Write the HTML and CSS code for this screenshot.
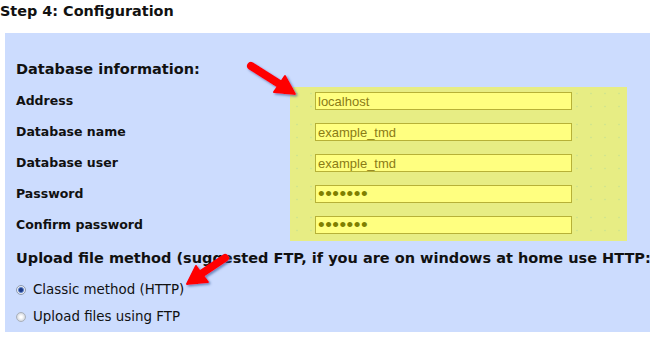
FILE: index.html
```html
<!DOCTYPE html>
<html lang="en">
<head>
<meta charset="UTF-8">
<title>Step 4: Configuration</title>
<link rel="stylesheet" href="styles.css">
</head>
<body>

<h1 class="step-title">Step 4: Configuration</h1>

<div class="panel">
  <h2 class="section-title">Database information:</h2>

  <div class="db-grid">
    <label class="field-label" for="db-host">Address</label>
    <div class="field-cell"><input class="field-input" id="db-host" type="text" value="localhost"></div>

    <label class="field-label" for="db-name">Database name</label>
    <div class="field-cell"><input class="field-input" id="db-name" type="text" value="example_tmd"></div>

    <label class="field-label" for="db-user">Database user</label>
    <div class="field-cell"><input class="field-input" id="db-user" type="text" value="example_tmd"></div>

    <label class="field-label" for="db-pass">Password</label>
    <div class="field-cell"><input class="field-input pass" id="db-pass" type="password" value="1234567"></div>

    <label class="field-label" for="db-pass2">Confirm password</label>
    <div class="field-cell field-cell-last"><input class="field-input pass" id="db-pass2" type="password" value="1234567"></div>
  </div>

  <h2 class="section-title upload-title">Upload file method (suggested FTP, if you are on windows at home use HTTP:</h2>

  <label class="radio-row"><input type="radio" name="method" checked>Classic method (HTTP)</label>
  <label class="radio-row"><input type="radio" name="method">Upload files using FTP</label>

  <!-- annotation arrows, drawn over the form -->
  <svg class="arrow arrow-db" width="65" height="47" viewBox="240 55 65 47">
    <g filter="url(#glow)">
      <line x1="251" y1="66" x2="281" y2="85" stroke="#f00" stroke-width="8" stroke-linecap="round"/>
      <polygon points="295,94 274,92 285,76" fill="#f00" stroke="#f00" stroke-width="2" stroke-linejoin="round"/>
    </g>
  </svg>

  <svg class="arrow arrow-upload" width="57" height="46" viewBox="178 248 57 46">
    <g filter="url(#glow)">
      <line x1="225" y1="258" x2="201" y2="274" stroke="#f00" stroke-width="8" stroke-linecap="round"/>
      <polygon points="187,284 196,266 208,282" fill="#f00" stroke="#f00" stroke-width="2" stroke-linejoin="round"/>
    </g>
  </svg>

  <svg class="defs" width="0" height="0">
    <filter id="glow" x="-30%" y="-30%" width="160%" height="160%">
      <feDropShadow dx="1.5" dy="1.5" stdDeviation="1.2" flood-color="#3b5e9c" flood-opacity="0.7"/>
    </filter>
  </svg>
</div>

</body>
</html>
```

FILE: styles.css
```css
body {
  margin: 0;
  background: #fff;
  color: #111;
  font-family: "DejaVu Sans", Verdana, sans-serif;
}

.step-title {
  margin: 3px 0 0;
  font-size: 14.4px;
  line-height: 16px;
  font-weight: bold;
}

.panel {
  position: relative;
  margin: 14px 0 0 5px;
  padding: 27px 0 6px 11px;
  background: #ccdcfe;
  overflow: hidden;
}

.section-title {
  margin: 0 0 9px;
  font-size: 14.5px;
  line-height: 18px;
  font-weight: bold;
}

.db-grid {
  display: grid;
  grid-template-columns: 274px 337px;
}

.field-label {
  padding-top: 5px;
  font-size: 12.5px;
  line-height: 18px;
  font-weight: bold;
}

.field-cell {
  padding: 5px 55px 8px 25px;
  background-color: #e7ed84;
  background-image: radial-gradient(circle, #d2e58c 0.8px, transparent 1.2px);
  background-size: 14px 13px;
}

.field-cell-last {
  padding-bottom: 7px;
}

.field-input {
  display: block;
  box-sizing: border-box;
  width: 257px;
  height: 18px;
  margin: 0;
  padding: 0 2px;
  border: 1px solid #b7b137;
  background: #ffff80;
  color: #8a7b16;
  font-family: "Liberation Sans", Arial, sans-serif;
  font-size: 13px;
  outline: none;
}

.field-input.pass {
  color: #7f7f00;
  font-size: 19px;
  letter-spacing: 0.5px;
}

.upload-title {
  margin: 8px 0 14px;
  white-space: nowrap;
}

.radio-row {
  display: flex;
  align-items: center;
  margin-bottom: 9px;
  font-size: 13.4px;
  line-height: 18px;
}

.radio-row:last-of-type {
  margin-bottom: 0;
}

.radio-row input {
  appearance: none;
  -webkit-appearance: none;
  box-sizing: border-box;
  width: 10px;
  height: 10px;
  margin: 0 7px 0 0;
  border: 1px solid #a9b0bb;
  border-radius: 50%;
  background: radial-gradient(circle, #ffffff 0 1px, #d5d9e0 4px);
}

.radio-row input:checked {
  border-color: #8f9bb0;
  background: radial-gradient(circle, #1d3a86 0 1.5px, #5f82c8 2.5px, #e8ecf4 3.5px);
}

.arrow {
  position: absolute;
  overflow: visible;
}

.arrow-db {
  left: 235px;
  top: 22px;
}

.arrow-upload {
  left: 173px;
  top: 215px;
}

.defs {
  position: absolute;
}
```
